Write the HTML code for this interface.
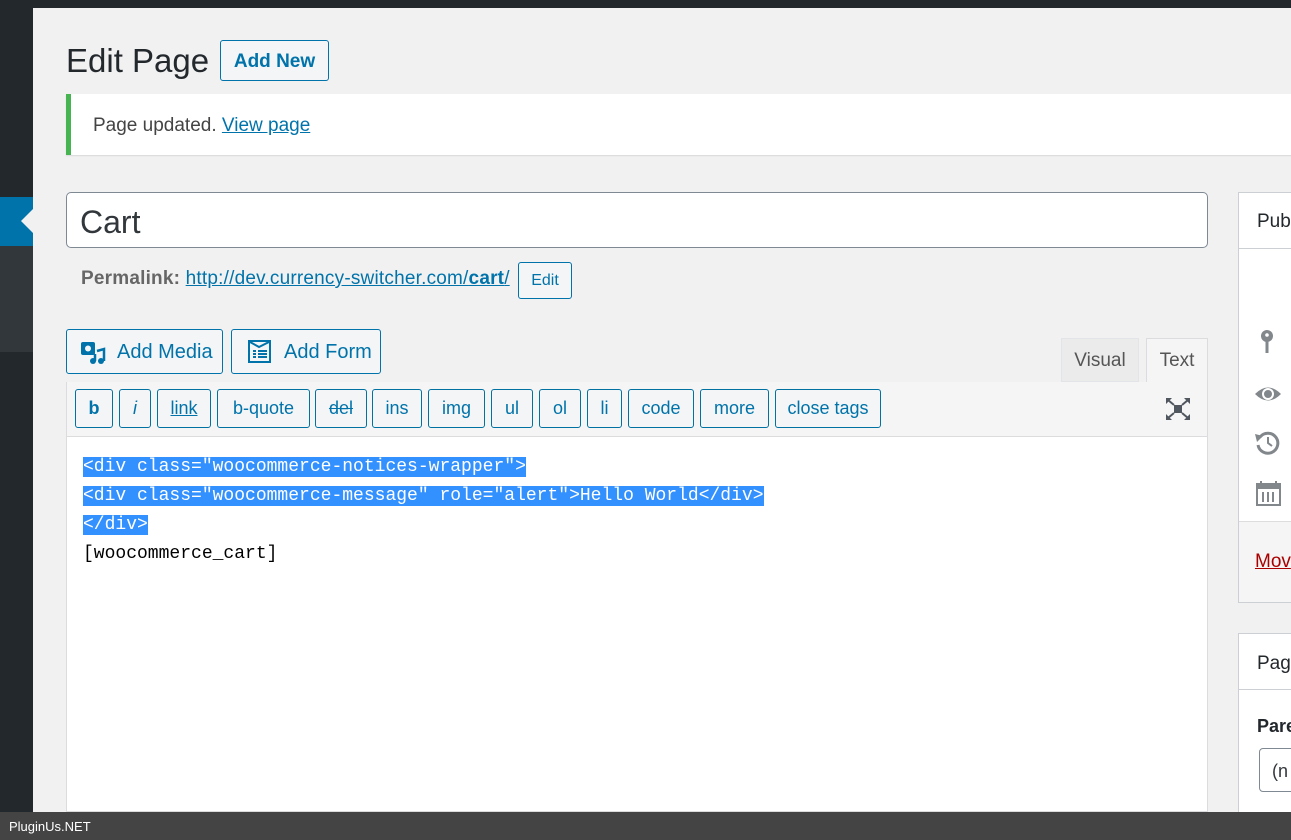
<!DOCTYPE html>
<html style="width:1291px;height:840px;overflow:hidden"><head><style>
*{box-sizing:border-box}
body{margin:0;width:1291px;height:840px;overflow:hidden;background:#f1f1f1;font-family:"Liberation Sans",sans-serif;color:#23282d;position:relative}
.abs{position:absolute}
.btn{position:absolute;border:1px solid #0073aa;border-radius:3px;background:#f3f5f6;color:#0073aa;font-size:17px;text-align:center}
.qt{position:absolute;top:389px;height:39px;border:1px solid #0071a1;border-radius:3px;background:#f3f5f6;color:#0073aa;font-size:18px;line-height:37px;text-align:center}
.code{font-family:"Liberation Mono",monospace;font-size:18px;color:#000;position:absolute;left:83px;line-height:29px}
.sel{background:#3390ff;color:#fff}
</style></head><body>
<div class="abs" style="left:0;top:0;width:1291px;height:8px;background:#23282d"></div>
<div class="abs" style="left:0;top:0;width:33px;height:840px;background:#23282d"></div>
<div class="abs" style="left:0;top:197px;width:33px;height:49px;background:#0073aa"></div>
<div class="abs" style="left:21px;top:209px;width:0;height:0;border-top:12px solid transparent;border-bottom:12px solid transparent;border-right:12px solid #f1f1f1"></div>
<div class="abs" style="left:0;top:246px;width:33px;height:106px;background:#32373c"></div>

<div class="abs" style="left:66px;top:42px;font-size:33px;color:#23282d">Edit Page</div>
<div class="btn" style="left:220px;top:40px;width:109px;height:41px;line-height:41px;font-size:19px;font-weight:bold">Add New</div>

<div class="abs" style="left:66px;top:94px;width:1240px;height:61px;background:#fff;border-left:5px solid #46b450;box-shadow:0 1px 1px rgba(0,0,0,.1)"></div>
<div class="abs" style="left:93px;top:115px;font-size:19px;color:#444">Page updated. <span style="color:#0073aa;text-decoration:underline">View page</span></div>

<div class="abs" style="left:66px;top:192px;width:1142px;height:56px;background:#fff;border:1px solid #7e8993;border-radius:5px"></div>
<div class="abs" style="left:80px;top:204px;font-size:32px;color:#32373c">Cart</div>
<div class="abs" style="left:81px;top:268px;font-size:19px;color:#666;letter-spacing:0.2px"><b>Permalink:</b> <span style="color:#0073aa;text-decoration:underline">http://dev.currency-switcher.com/<b>cart</b>/</span></div>
<div class="btn" style="left:518px;top:262px;width:54px;height:37px;line-height:35px;font-size:16px">Edit</div>

<div class="btn" style="left:66px;top:329px;width:157px;height:45px;line-height:45px;font-size:20px;text-align:left;padding-left:50px">Add Media</div>
<svg class="abs" style="left:80px;top:341px" width="26" height="24" viewBox="0 0 26 24"><rect x="1" y="1" width="14" height="13" rx="2" fill="#0073aa"/><circle cx="8" cy="7.5" r="3" fill="#f3f5f6"/><path d="M17 10 L24 8 V20" stroke="#0073aa" stroke-width="2.5" fill="none"/><circle cx="21" cy="20" r="3" fill="#0073aa"/><circle cx="13" cy="20" r="3" fill="#0073aa"/><path d="M15 20V13" stroke="#0073aa" stroke-width="2.5"/></svg>
<div class="btn" style="left:231px;top:329px;width:150px;height:45px;line-height:45px;font-size:20px;text-align:left;padding-left:52px">Add Form</div>
<svg class="abs" style="left:248px;top:340px" width="24" height="24" viewBox="0 0 24 24"><rect x="1" y="1" width="21" height="21" fill="none" stroke="#0073aa" stroke-width="2"/><path d="M2 2 L11 7 L21 2" stroke="#0073aa" stroke-width="2" fill="none"/><path d="M5 11h3M10 11h9M5 14h3M10 14h9M5 17h3M10 17h9" stroke="#0073aa" stroke-width="2"/></svg>

<div class="abs" style="left:1061px;top:338px;width:78px;height:44px;background:#ebebeb;border:1px solid #e2e4e7;color:#555;font-size:19px;text-align:center;line-height:44px">Visual</div>
<div class="abs" style="left:1146px;top:338px;width:62px;height:45px;background:#f5f5f5;border:1px solid #dcdcde;border-bottom:none;color:#555;font-size:19px;text-align:center;line-height:44px">Text</div>

<div class="abs" style="left:66px;top:382px;width:1142px;height:430px;background:#fff;border:1px solid #dcdcde"></div>
<div class="abs" style="left:67px;top:382px;width:1140px;height:55px;background:#f5f5f5;border-bottom:1px solid #dcdcde"></div>
<div class="qt" style="left:75px;width:38px;font-weight:bold">b</div>
<div class="qt" style="left:119px;width:32px;font-style:italic">i</div>
<div class="qt" style="left:157px;width:54px;text-decoration:underline">link</div>
<div class="qt" style="left:217px;width:93px">b-quote</div>
<div class="qt" style="left:315px;width:52px;text-decoration:line-through">del</div>
<div class="qt" style="left:372px;width:50px">ins</div>
<div class="qt" style="left:428px;width:57px">img</div>
<div class="qt" style="left:491px;width:42px">ul</div>
<div class="qt" style="left:539px;width:42px">ol</div>
<div class="qt" style="left:587px;width:35px">li</div>
<div class="qt" style="left:628px;width:66px">code</div>
<div class="qt" style="left:700px;width:69px">more</div>
<div class="qt" style="left:775px;width:106px">close tags</div>
<svg class="abs" style="left:1165px;top:397px" width="26" height="24" viewBox="0 0 26 24"><rect x="9" y="8" width="8" height="8" fill="#50575e"/><path d="M1 1h6L1 7zM25 1h-6l6 6zM1 23h6L1 17zM25 23h-6l6-6z" fill="#50575e"/><path d="M3 3l6 5M23 3l-6 5M3 21l6-5M23 21l-6-5" stroke="#50575e" stroke-width="2"/></svg>

<div class="code" style="top:453px"><span class="sel">&lt;div class="woocommerce-notices-wrapper"&gt; </span><br><span class="sel">&lt;div class="woocommerce-message" role="alert"&gt;Hello World&lt;/div&gt; </span><br><span class="sel">&lt;/div&gt;</span><br>[woocommerce_cart]</div>

<div class="abs" style="left:1238px;top:192px;width:60px;height:411px;background:#fff;border:1px solid #ccd0d4"></div>
<div class="abs" style="left:1239px;top:248px;width:60px;height:1px;background:#ccd0d4"></div>
<div class="abs" style="left:1257px;top:211px;font-size:19px;color:#23282d">Pub</div>
<svg class="abs" style="left:1259px;top:329px" width="16" height="26" viewBox="0 0 16 26"><circle cx="8" cy="7" r="6" fill="#82878c"/><circle cx="8" cy="6" r="1.8" fill="#fff"/><rect x="6.5" y="11" width="3" height="13" fill="#82878c"/></svg>
<svg class="abs" style="left:1254px;top:383px" width="28" height="22" viewBox="0 0 28 22"><path d="M1 11 Q14 -2 27 11 Q14 24 1 11Z" fill="#82878c"/><circle cx="14" cy="11" r="6" fill="#fff"/><circle cx="14" cy="11" r="4" fill="#82878c"/></svg>
<svg class="abs" style="left:1254px;top:429px" width="27" height="27" viewBox="0 0 27 27"><path d="M6 8 A10 10 0 1 1 4 16" stroke="#82878c" stroke-width="3" fill="none"/><path d="M1 5l8 2-6 6z" fill="#82878c"/><path d="M14 8v6l4 3" stroke="#82878c" stroke-width="2" fill="none"/></svg>
<svg class="abs" style="left:1256px;top:480px" width="25" height="26" viewBox="0 0 25 26"><rect x="1" y="4" width="23" height="21" fill="none" stroke="#82878c" stroke-width="2"/><rect x="1" y="4" width="23" height="5" fill="#82878c"/><path d="M5 1v6M20 1v6M7 12v10M12 12v10M17 12v10" stroke="#82878c" stroke-width="2"/></svg>
<div class="abs" style="left:1239px;top:521px;width:60px;height:1px;background:#ddd"></div>
<div class="abs" style="left:1239px;top:522px;width:60px;height:80px;background:#f5f5f5"></div>
<div class="abs" style="left:1255px;top:551px;font-size:19px;color:#a00;text-decoration:underline">Mov</div>

<div class="abs" style="left:1238px;top:633px;width:60px;height:180px;background:#fff;border:1px solid #ccd0d4"></div>
<div class="abs" style="left:1239px;top:689px;width:60px;height:1px;background:#ccd0d4"></div>
<div class="abs" style="left:1257px;top:653px;font-size:19px">Pag</div>
<div class="abs" style="left:1257px;top:716px;font-size:18px;font-weight:bold;color:#23282d">Pare</div>
<div class="abs" style="left:1259px;top:748px;width:60px;height:44px;border:1px solid #7e8993;border-radius:4px;font-size:18px;line-height:44px;padding-left:12px;color:#32373c">(n</div>

<div class="abs" style="left:0;top:812px;width:1291px;height:28px;background:#444"></div>
<div class="abs" style="left:9px;top:819px;font-size:13px;color:#fff">PluginUs.NET</div>
</body></html>
